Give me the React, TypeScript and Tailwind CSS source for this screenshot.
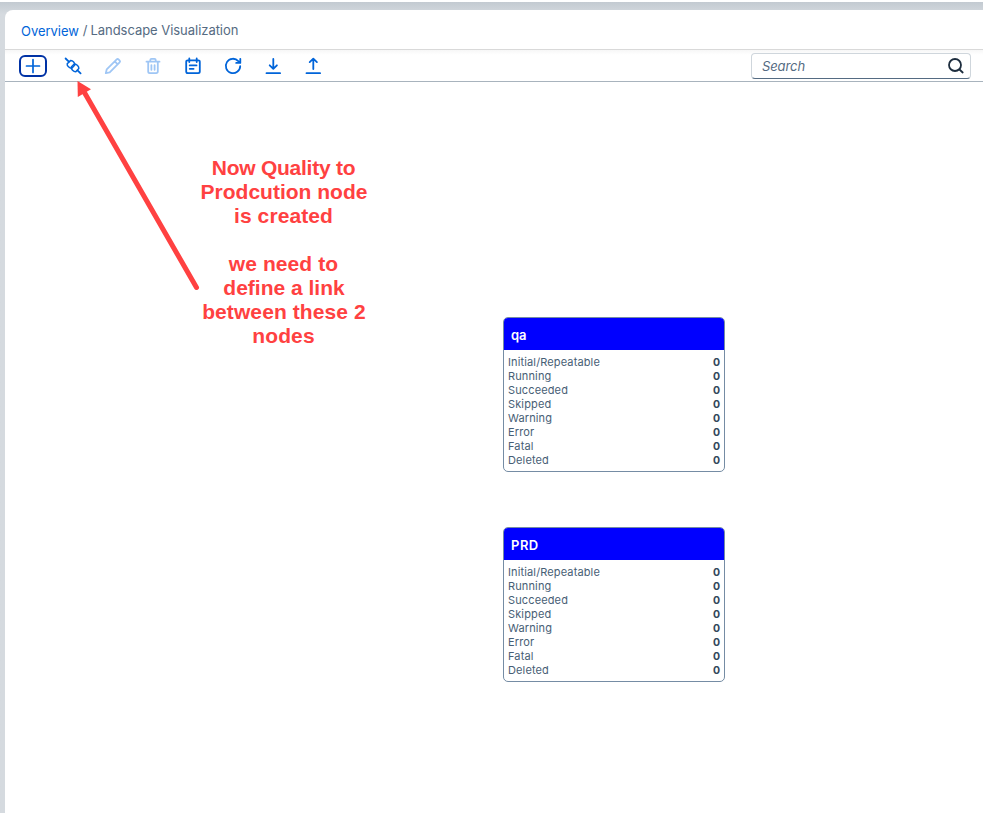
import React from "react";

const statuses = ["Initial/Repeatable", "Running", "Succeeded", "Skipped", "Warning", "Error", "Fatal", "Deleted"];

function Icon({ children, disabled = false }: { children: React.ReactNode; disabled?: boolean }) {
  return (
    <svg
      viewBox="-10 -10 20 20"
      className={`h-5 w-5 ${disabled ? "text-[#9fc6f5]" : "text-[#0064d9]"}`}
      fill="none"
      stroke="currentColor"
      strokeWidth="1.8"
      strokeLinecap="round"
      strokeLinejoin="round"
    >
      {children}
    </svg>
  );
}

function Node({ title, titleClass, className }: { title: string; titleClass: string; className: string }) {
  return (
    <section className={`absolute left-[498px] h-[155px] w-[222px] overflow-hidden rounded-[5px] border border-[#758ca4] bg-white ${className}`}>
      <h2 className={`flex h-8 items-center bg-[#0000ff] pt-[3px] pl-[7px] text-[13px] font-semibold text-white ${titleClass}`}>{title}</h2>
      <ul className="px-1 pt-[5px] text-[11px] leading-[14px] tracking-[0.13px] text-[#475e75]">
        {statuses.map((s) => (
          <li key={s} className="flex h-[14px] justify-between">
            <span>{s}</span>
            <span className="pt-px text-[10.5px] font-bold tracking-normal text-[#32465a]">0</span>
          </li>
        ))}
      </ul>
    </section>
  );
}

export default function App() {
  return (
    <div className="h-[813px] w-[983px] overflow-hidden bg-white pt-[2px] font-['Inter',sans-serif]">
      <div className="h-[811px] bg-linear-to-b from-[#c3cad1] to-[#d5dadf] to-[12px] pt-2 pl-[5px]">
        <div className="relative flex h-[803px] flex-col rounded-tl-[8px] bg-white">
          <header className="flex h-10 items-center border-b border-[#d9d9d9] pt-[2px] pl-4 text-[13px] tracking-[-0.04px] text-[#556b82]">
            <a className="pt-[2px] text-[#0064d9]">Overview</a>
            <span className="mr-[3px] ml-1">/</span>
            <span>Landscape Visualization</span>
          </header>
          <div className="flex h-8 items-center justify-between border-b border-[#a8b3bd] bg-linear-to-b from-[#f7f7f7] to-white to-[5px] pr-3 pl-[14px]">
            <div className="flex items-center gap-5">
              <button className="-mr-1 flex h-[22px] w-7 items-center justify-center rounded-[6px] border-2 border-[#0032a5]">
                <Icon><path d="M-6.5 0H6.5M0-6.5V6.5" strokeWidth="1.7" /></Icon>
              </button>
              <Icon>
                <path d="M-7.4-7.5-4.2-4.4M4.5 4.4 7.6 7.4" />
                <path d="M-5.8-2.2-2.5-5.4C-.3-5.7 2.3-3 1.8-.9L-1.2 2.2C-3.6 2.3-6.1-.1-5.8-2.2Z" strokeWidth="1.5" />
                <path d="M5.8 2.5 2.8 5.7C.5 5.8-2.1 3.3-1.7 1.1L1.2-1.9C3.7-2 6.1.4 5.8 2.5Z" strokeWidth="1.5" />
              </Icon>
              <Icon disabled><path d="M-7.2 7.2-6.3 3.4 3.7-6.6Q4.6-7.5 5.5-6.6L6.7-5.4Q7.5-4.5 6.6-3.6L-3.3 6.3ZM1.8-4.6 4.7-1.7" /></Icon>
              <Icon disabled><path d="M-6.5-4.3H6.5M-2.7-4.5V-6Q-2.7-7.2-1.5-7.2H1.5Q2.7-7.2 2.7-6V-4.5M-4.8-4V5.5Q-4.8 7.1-3.2 7.1H3.2Q4.8 7.1 4.8 5.5V-4M-1.6-.9V3.8M1.6-.9V3.8" /></Icon>
              <Icon><path d="M-5.2-5.7H5.2Q6.8-5.7 6.8-4.2V5.6Q6.8 7.2 5.2 7.2H-5.2Q-6.8 7.2-6.8 5.6V-4.2Q-6.8-5.7-5.2-5.7ZM-3.7-7.5V-4M3.7-7.5V-4M-3.3-.6H3.5M-3.3 2.8H.6" /></Icon>
              <Icon><path d="M7.2.2A7.2 7.2 0 1 1 5.3-4.9L7-3.3M7.3-7.2V-3.1H3.2" /></Icon>
              <Icon><path d="M.3-7V2.6M-3.3-.7 .3 2.8 3.9-.7M-6.5 7.2H7.1" /></Icon>
              <Icon><path d="M.3 3V-7M-3.3-3.9 .3-7.4 3.9-3.9M-6.5 7.2H7.1" /></Icon>
            </div>
            <div className="flex h-[26px] w-[220px] items-center justify-between rounded-[4px] border border-b-[#556b82] border-[#cfd6dc] bg-white pr-1 pl-[10px]">
              <span className="pt-[2px] text-[13px] tracking-[-0.1px] text-[#556b82] italic">Search</span>
              <svg viewBox="-10 -10 20 20" className="h-5 w-5" fill="none" stroke="#1d2d3e" strokeWidth="1.8" strokeLinecap="round"><circle cx="-1" cy="-1" r="6" /><path d="M3.5 3.5 6.7 6.5" /></svg>
            </div>
          </div>
          <main className="flex-1">
            <Node title="qa" titleClass="" className="top-[307px]" />
            <Node title="PRD" titleClass="tracking-[0.5px]" className="top-[517px]" />
            <p className="absolute top-[146px] left-[179px] w-[200px] text-center font-['Liberation_Sans',sans-serif] text-[21px] leading-6 font-bold text-[#ff4141]">
              <span className="-ml-px tracking-[-0.25px]">Now Quality to</span><br />
              Prodcution node<br />
              <span className="-ml-px tracking-[0.1px]">is created</span><br /><br />
              <span className="-ml-px tracking-[0.1px]">we need to</span><br />
              define a link<br />
              <span className="tracking-[0.1px]">between these 2</span><br />
              <span className="-ml-px tracking-[0.1px]">nodes</span>
            </p>
            <svg className="absolute top-[65px] left-[65px] h-[225px] w-[140px]" viewBox="70 75 140 225">
              <path d="M83 90 196.5 287.5" stroke="#ff4141" strokeWidth="5" strokeLinecap="round" />
              <path d="M77.5 81 77.8 97 91 89.3Z" fill="#ff4141" />
            </svg>
          </main>
        </div>
      </div>
    </div>
  );
}
